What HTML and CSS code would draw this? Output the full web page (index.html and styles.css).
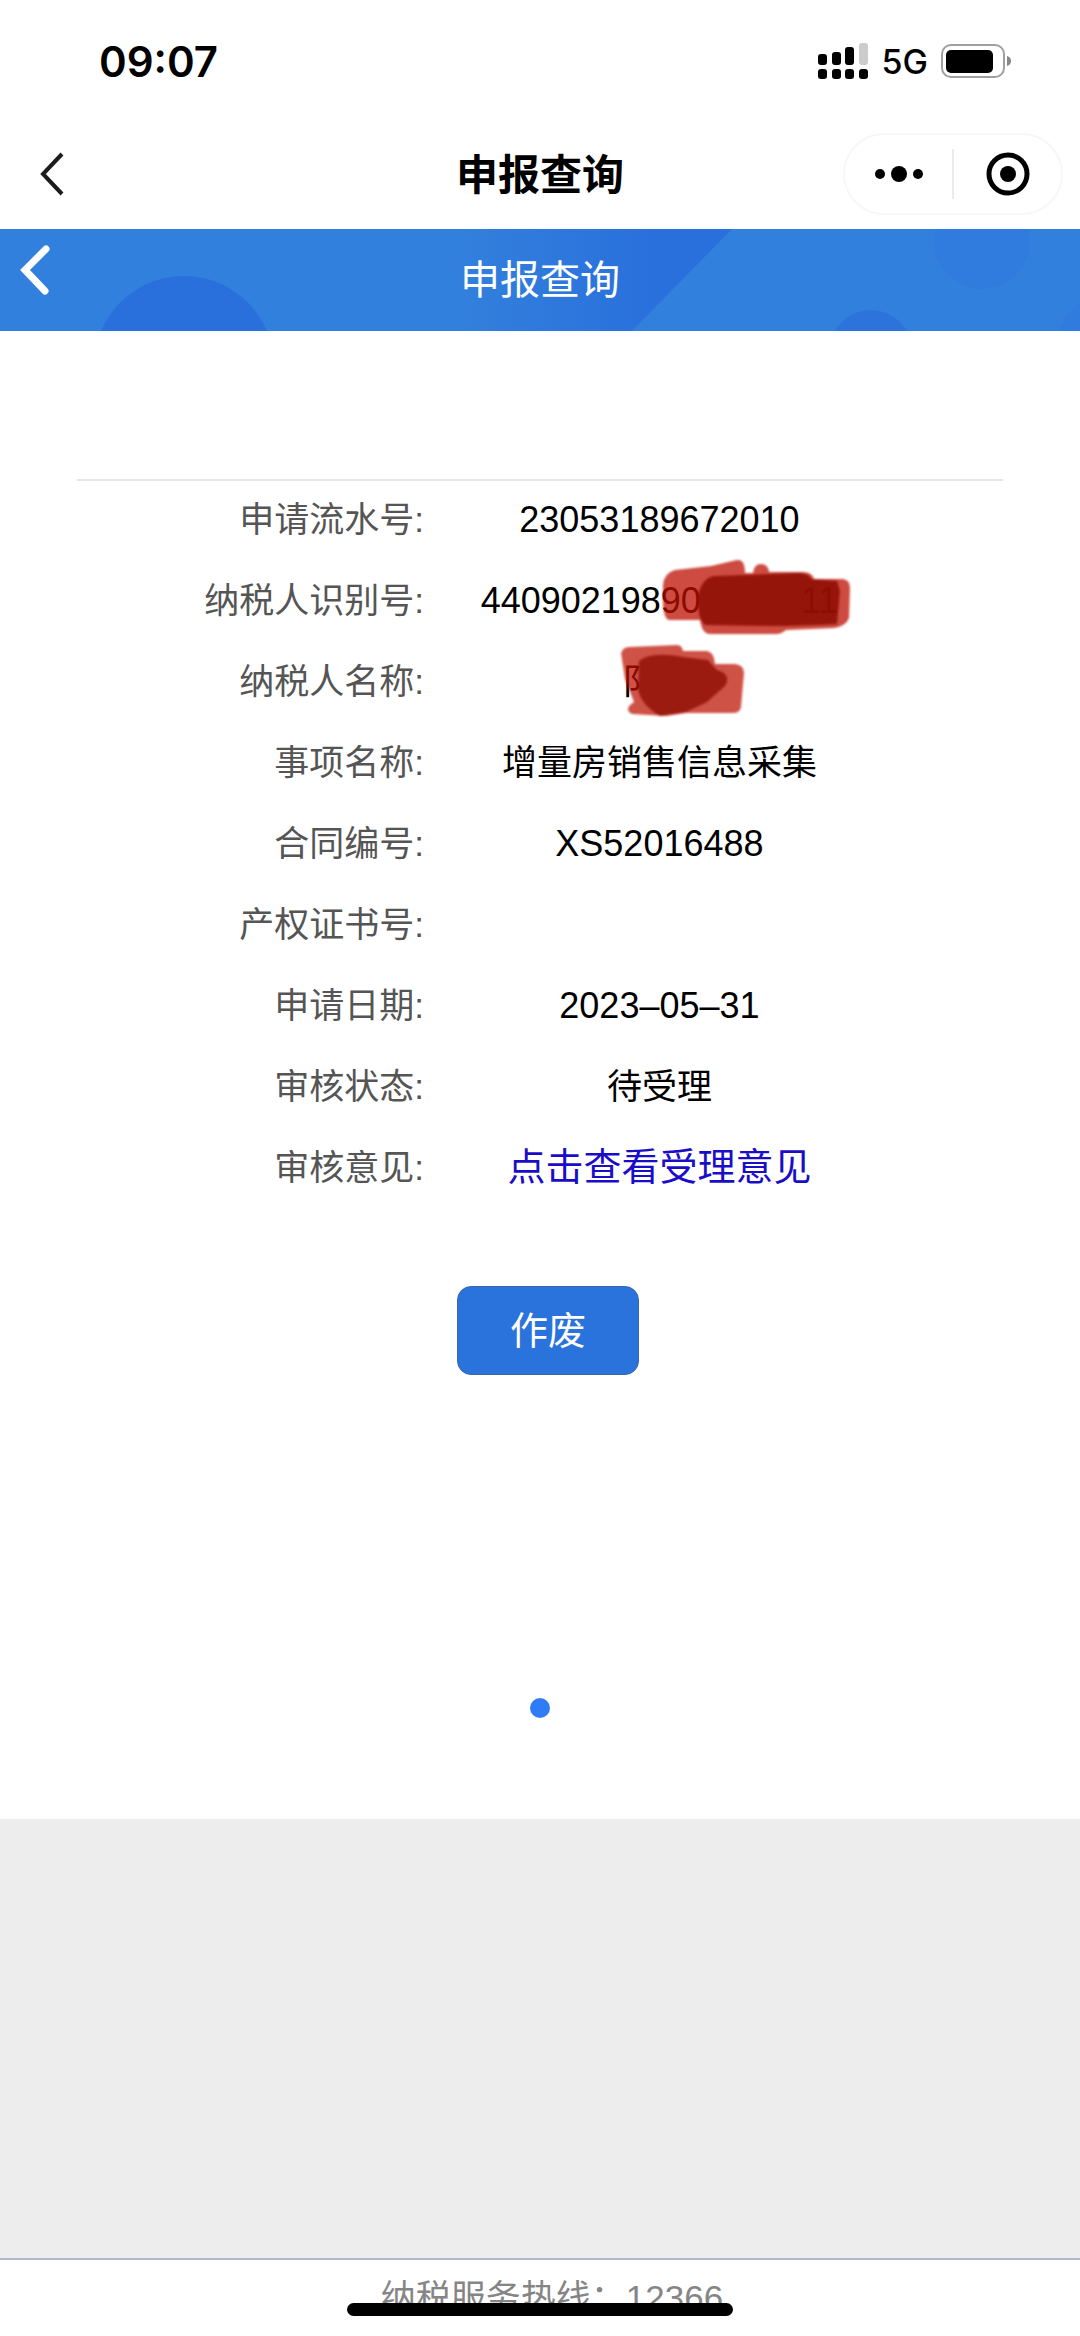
FILE: index.html
```html
<!DOCTYPE html>
<html lang="zh-CN">
<head>
<meta charset="utf-8">
<meta name="viewport" content="width=device-width, initial-scale=1">
<title>申报查询</title>
<link rel="stylesheet" href="styles.css">
</head>
<body>
<div class="status-bar">
  <time class="clock">09:07</time>
  <div class="status-icons">
    <svg class="signal" width="51" height="36" viewBox="0 0 51 36" aria-hidden="true">
      <rect x="0" y="11" width="9" height="11" rx="3"/><rect x="14" y="9" width="9" height="13" rx="3"/><rect x="27" y="4" width="9" height="18" rx="3"/><rect x="41" y="0" width="9" height="22" rx="3" fill="#ccc"/>
      <rect x="0" y="26" width="9" height="10" rx="3"/><rect x="14" y="26" width="9" height="10" rx="3"/><rect x="27" y="26" width="9" height="10" rx="3"/><rect x="41" y="26" width="9" height="10" rx="3"/>
    </svg>
    <span class="network">5G</span>
    <svg class="battery" width="70" height="34" viewBox="0 0 70 34" aria-hidden="true">
      <rect x="1" y="1" width="62" height="32" rx="9" fill="none" stroke="#a0a0a0" stroke-width="2"/>
      <rect x="5" y="6" width="47" height="23" rx="5"/>
      <path d="M66 12q4 1 4 5t-4 5z" fill="#888"/>
    </svg>
  </div>
</div>
<nav class="app-nav">
  <button class="icon-button nav-back" aria-label="返回">
    <svg width="25" height="44" viewBox="0 0 25 44"><path d="M22 2 3 22l19 20" fill="none" stroke="#1c1c1c" stroke-width="4"/></svg>
  </button>
  <h1 class="nav-title">申报查询</h1>
  <div class="capsule">
    <button class="icon-button capsule-item" aria-label="更多">
      <svg width="48" height="18" viewBox="0 0 48 18"><circle cx="5" cy="9" r="5"/><circle cx="24" cy="9" r="8"/><circle cx="43" cy="9" r="5"/></svg>
    </button>
    <button class="icon-button capsule-item" aria-label="关闭">
      <svg width="44" height="44" viewBox="0 0 44 44"><circle cx="22" cy="22" r="19" fill="none" stroke="#000" stroke-width="5"/><circle cx="22" cy="22" r="8"/></svg>
    </button>
  </div>
</nav>
<header class="page-header">
  <svg class="header-art" viewBox="0 0 1080 102" preserveAspectRatio="none" aria-hidden="true">
    <defs><linearGradient id="band" x1="0" x2="1"><stop offset="0" stop-color="#2a70dc" stop-opacity="0"/><stop offset=".7" stop-color="#2a70dc"/></linearGradient></defs>
    <path d="M460 0H732L632 102H460Z" fill="url(#band)"/>
    <circle cx="184" cy="137" r="90" fill="#2a70dc"/>
    <circle cx="871" cy="122" r="41" fill="#2c74dc"/>
    <circle cx="982" cy="12" r="48" fill="#307cde"/>
    <path d="M1080 74q-16 10-20 28h20z" fill="#307cde"/>
  </svg>
  <button class="icon-button header-back" aria-label="返回上一页">
    <svg width="30" height="52" viewBox="0 0 30 52"><path d="M26 5 5 26l20 21" fill="none" stroke="#fff" stroke-width="7" stroke-linecap="round"/></svg>
  </button>
  <h2 class="header-title">申报查询</h2>
</header>
<main class="content">
  <table class="details">
    <tbody>
      <tr><th scope="row">申请流水号:</th><td class="latin">23053189672010</td></tr>
      <tr><th scope="row">纳税人识别号:</th><td class="latin"><span class="masked">44090219890<span class="gap-id"></span>11
        <svg class="scribble scribble-id" width="190" height="80" viewBox="0 0 190 80" aria-hidden="true">
          <path d="M2 26Q3 14 14 11L50 7 76 1q8-1 8 13h8q1-9 8-9 7 0 8 8h34q9 0 11 7h29q7 1 7 9l-1 30q-3 8-15 10l-48 2q-5 4-9 4H49q-8 0-10-14H8Q3 60 2 45Z" fill="#bc0f00" fill-opacity=".75"/>
          <path d="M37 36Q42 17 55 17l83-3q11 1 12 6l26 2 3 10-3 33q-40 2-65 2L44 66Q36 60 37 36Z" fill="#8e0e03" fill-opacity=".88"/>
        </svg></span></td></tr>
      <tr><th scope="row">纳税人名称:</th><td><span class="masked">阝<span class="gap-name"></span>
        <svg class="scribble scribble-name" width="124" height="72" viewBox="0 0 124 72" aria-hidden="true">
          <path d="M0 8Q2 2 8 2L56 0q5 0 6 6h24q7 1 8 13h20q9 1 9 9l-3 34q-1 6-8 6H65l-20 3-34-2q-7-3-2-9l4-3L4 34Z" fill="#bc0f00" fill-opacity=".72"/>
          <path d="M18 16Q30 6 62 12l25 3q6 7 9 10 15 4 8 16L86 57 65 67l-26 4Q20 60 17 44Z" fill="#8e0e03" fill-opacity=".8"/>
        </svg></span></td></tr>
      <tr><th scope="row">事项名称:</th><td>增量房销售信息采集</td></tr>
      <tr><th scope="row">合同编号:</th><td class="latin">XS52016488</td></tr>
      <tr><th scope="row">产权证书号:</th><td></td></tr>
      <tr><th scope="row">申请日期:</th><td class="latin">2023–05–31</td></tr>
      <tr><th scope="row">审核状态:</th><td>待受理</td></tr>
      <tr><th scope="row">审核意见:</th><td><a class="opinion-link" href="#opinion">点击查看受理意见</a></td></tr>
    </tbody>
  </table>
  <button class="void-button">作废</button>
  <span class="page-dot"></span>
</main>
<footer class="hotline">
  <span>纳税服务热线：12366</span>
  <div class="home-indicator"></div>
</footer>
</body>
</html>
```
FILE: styles.css
```css
* { box-sizing: border-box; }

body {
  margin: 0;
  min-height: 100vh;
  display: flex;
  flex-direction: column;
  background: #ededed;
  color: #000;
  font-family: "Liberation Sans", "Noto Sans CJK SC", sans-serif;
  font-size: 35px;
}

h1, h2 { margin: 0; }

button { font-family: inherit; cursor: pointer; }

.icon-button {
  display: flex;
  align-items: center;
  justify-content: center;
  padding: 0;
  border: 0;
  background: none;
}

.status-bar {
  display: flex;
  align-items: center;
  justify-content: space-between;
  height: 122px;
  padding: 0 69px 0 99px;
  background: #fff;
  font-family: Inter, sans-serif;
}

.clock { font-size: 42px; font-weight: 600; }

.status-icons { display: flex; align-items: center; gap: 13px; }

.network { font-size: 34px; font-weight: 500; }

.app-nav {
  display: grid;
  grid-template-columns: 1fr auto 1fr;
  align-items: center;
  height: 107px;
  padding: 0 17px 3px 40px;
  background: #fff;
}

.nav-back { justify-self: start; }

.nav-title {
  padding-top: 4px;
  padding-right: 23px;
  font-size: 42px;
  font-weight: 700;
  line-height: 60px;
}

.capsule {
  display: flex;
  align-items: center;
  justify-self: end;
  width: 220px;
  height: 82px;
  border: 2px solid #f7f7f7;
  border-radius: 41px;
}

.capsule-item { flex: 1; height: 50px; }
.capsule-item + .capsule-item { border-left: 2px solid #ebebeb; }

.page-header {
  position: relative;
  display: grid;
  grid-template-columns: 1fr auto 1fr;
  align-items: start;
  height: 102px;
  padding: 15px 20px;
  background: #3280dd;
  color: #fff;
}

.header-art {
  position: absolute;
  inset: 0;
  width: 100%;
  height: 100%;
}

.header-back, .header-title { position: relative; }

.header-back { justify-self: start; }

.header-title {
  font-size: 40px;
  font-weight: 400;
  line-height: 72px;
}

.content {
  display: flex;
  flex-direction: column;
  align-items: center;
  padding: 148px 77px 101px;
  background: #fff;
}

.details {
  width: 100%;
  border-top: 2px solid #e6e6e6;
  border-collapse: separate;
  border-spacing: 0;
  table-layout: fixed;
}

.details th, .details td {
  height: 81px;
  padding: 0 0 4px;
  line-height: 48px;
  font-weight: 400;
  white-space: nowrap;
}

.details th {
  width: 38%;
  padding-right: 5px;
  color: #555;
  text-align: right;
}

.details td { padding-right: 118px; padding-left: 5px; text-align: center; }

.details .latin { font-size: 36px; }

.masked { position: relative; display: inline-block; }

.gap-id { display: inline-block; width: 100px; }
.gap-name { display: inline-block; width: 40px; }

.scribble { position: absolute; overflow: visible; filter: blur(1px); }
.scribble-id { top: -18px; left: 180px; }
.scribble-name { top: -13px; left: -1px; }

.opinion-link { color: #1a0dc8; font-size: 38px; text-decoration: none; }

.void-button {
  width: 182px;
  height: 89px;
  margin-top: 76px;
  margin-left: 16px;
  padding: 0 0 6px;
  border: 1px solid #3a68ae;
  border-radius: 14px;
  background: #2a72dc;
  color: #fff;
  font-size: 38px;
}

.page-dot {
  width: 20px;
  height: 20px;
  margin-top: 323px;
  border-radius: 50%;
  background: #2f7cf6;
}

.hotline {
  position: relative;
  height: 78px;
  margin-top: auto;
  padding-top: 12px;
  padding-left: 24px;
  border-top: 2px solid #adbac8;
  background: #fff;
  color: #858585;
  line-height: 52px;
  text-align: center;
}

.home-indicator {
  position: absolute;
  bottom: 20px;
  left: 50%;
  width: 386px;
  height: 13px;
  margin-left: -193px;
  border-radius: 7px;
  background: #000;
}
```
